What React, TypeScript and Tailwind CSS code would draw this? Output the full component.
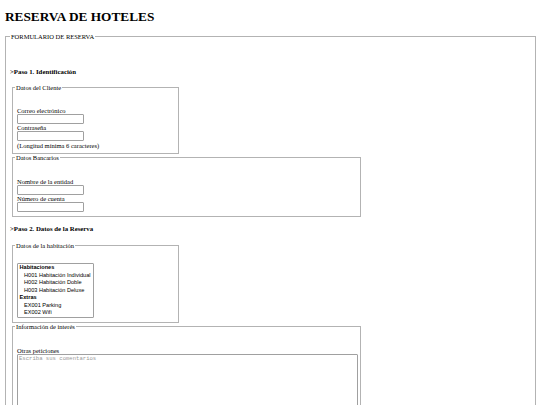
import React from 'react';

const serif = { fontFamily: '"Liberation Serif", "Times New Roman", serif' };

const Field = ({ label }: { label: string }) => (
  <div>
    <label className="block text-[6.5px] leading-[7px] text-black">{label}</label>
    <input type="text" className="block w-[67px] h-[10px] border border-[#a0a0a0] rounded-[1px] bg-white" />
  </div>
);

const Box = ({
  title,
  className,
  children,
}: {
  title: string;
  className: string;
  children: React.ReactNode;
}) => (
  <fieldset className={`ml-[2px] border border-[#b3b3b3] pl-[2px] min-w-0 ${className}`}>
    <legend className="px-[1px] text-[6.5px] leading-[7px] text-black">{title}</legend>
    <div className="pl-[2px]">{children}</div>
  </fieldset>
);

const App = () => {
  return (
    <div className="w-[540px] h-[405px] overflow-hidden bg-white text-black" style={serif}>
      <h1 className="ml-[5px] pt-[9px] text-[13.3px] leading-[16px] font-bold">RESERVA DE HOTELES</h1>

      <fieldset className="mt-[8px] ml-[5px] mr-[4px] min-w-0 border border-[#b3b3b3] pl-[4px] pr-[4px] pb-[10px]">
        <legend className="px-[1px] text-[6.5px] leading-[7px]">FORMULARIO DE RESERVA</legend>

        <h4 className="mt-[28px] mb-[9px] text-[6.8px] leading-[7px] font-bold">&gt;Paso 1. Identificación</h4>

        <Box title="Datos del Cliente" className="w-[167px] pr-[4px] pb-[3px]">
          <div className="pt-[16px]">
            <Field label="Correo electrónico" />
            <Field label="Contraseña" />
            <div className="text-[6.5px] leading-[8px] mt-[0.5px] whitespace-nowrap">(Longitud mínima 6 caracteres)</div>
          </div>
        </Box>

        <Box title="Datos Bancarios" className="w-[349px] pr-[4px] pb-[4px]">
          <div className="pt-[17px]">
            <Field label="Nombre de la entidad" />
            <Field label="Número de cuenta" />
          </div>
        </Box>

        <h4 className="mt-[8px] mb-[10px] text-[6.8px] leading-[7px] font-bold">&gt;Paso 2. Datos de la Reserva</h4>

        <Box title="Datos de la habitación" className="w-[167px] pr-[4px] pb-[4px]">
          <div className="pt-[14px]">
            <div
              className="w-[77px] border border-[#a0a0a0] rounded-[1px] pl-[1.5px] py-[0.5px] text-[5.6px] leading-[7.5px] whitespace-nowrap overflow-hidden"
              style={{ fontFamily: '"Liberation Sans", Arial, sans-serif' }}
            >
              <div className="font-bold">Habitaciones</div>
              <div className="pl-[4.5px]">H001 Habitación Individual</div>
              <div className="pl-[4.5px]">H002 Habitación Doble</div>
              <div className="pl-[4.5px]">H003 Habitación Deluxe</div>
              <div className="font-bold">Extras</div>
              <div className="pl-[4.5px]">EX001 Parking</div>
              <div className="pl-[4.5px]">EX002 Wifi</div>
            </div>
          </div>
        </Box>

        <Box title="Información de interés" className="w-[349px] pr-[2px] pb-[4px]">
          <div className="pt-[17px]">
            <label className="block text-[6.5px] leading-[7px]">Otras peticiones</label>
            <textarea
              readOnly
              placeholder="Escriba sus comentarios"
              className="block w-[341px] h-[90px] border border-[#a0a0a0] rounded-[1px] px-[1px] pt-[1px] text-[5.6px] leading-[6.5px] placeholder:text-[#9a9a9a] resize-none"
              style={{ fontFamily: '"Liberation Mono", "Courier New", monospace' }}
            />
          </div>
        </Box>
      </fieldset>
    </div>
  );
};

export default App;
